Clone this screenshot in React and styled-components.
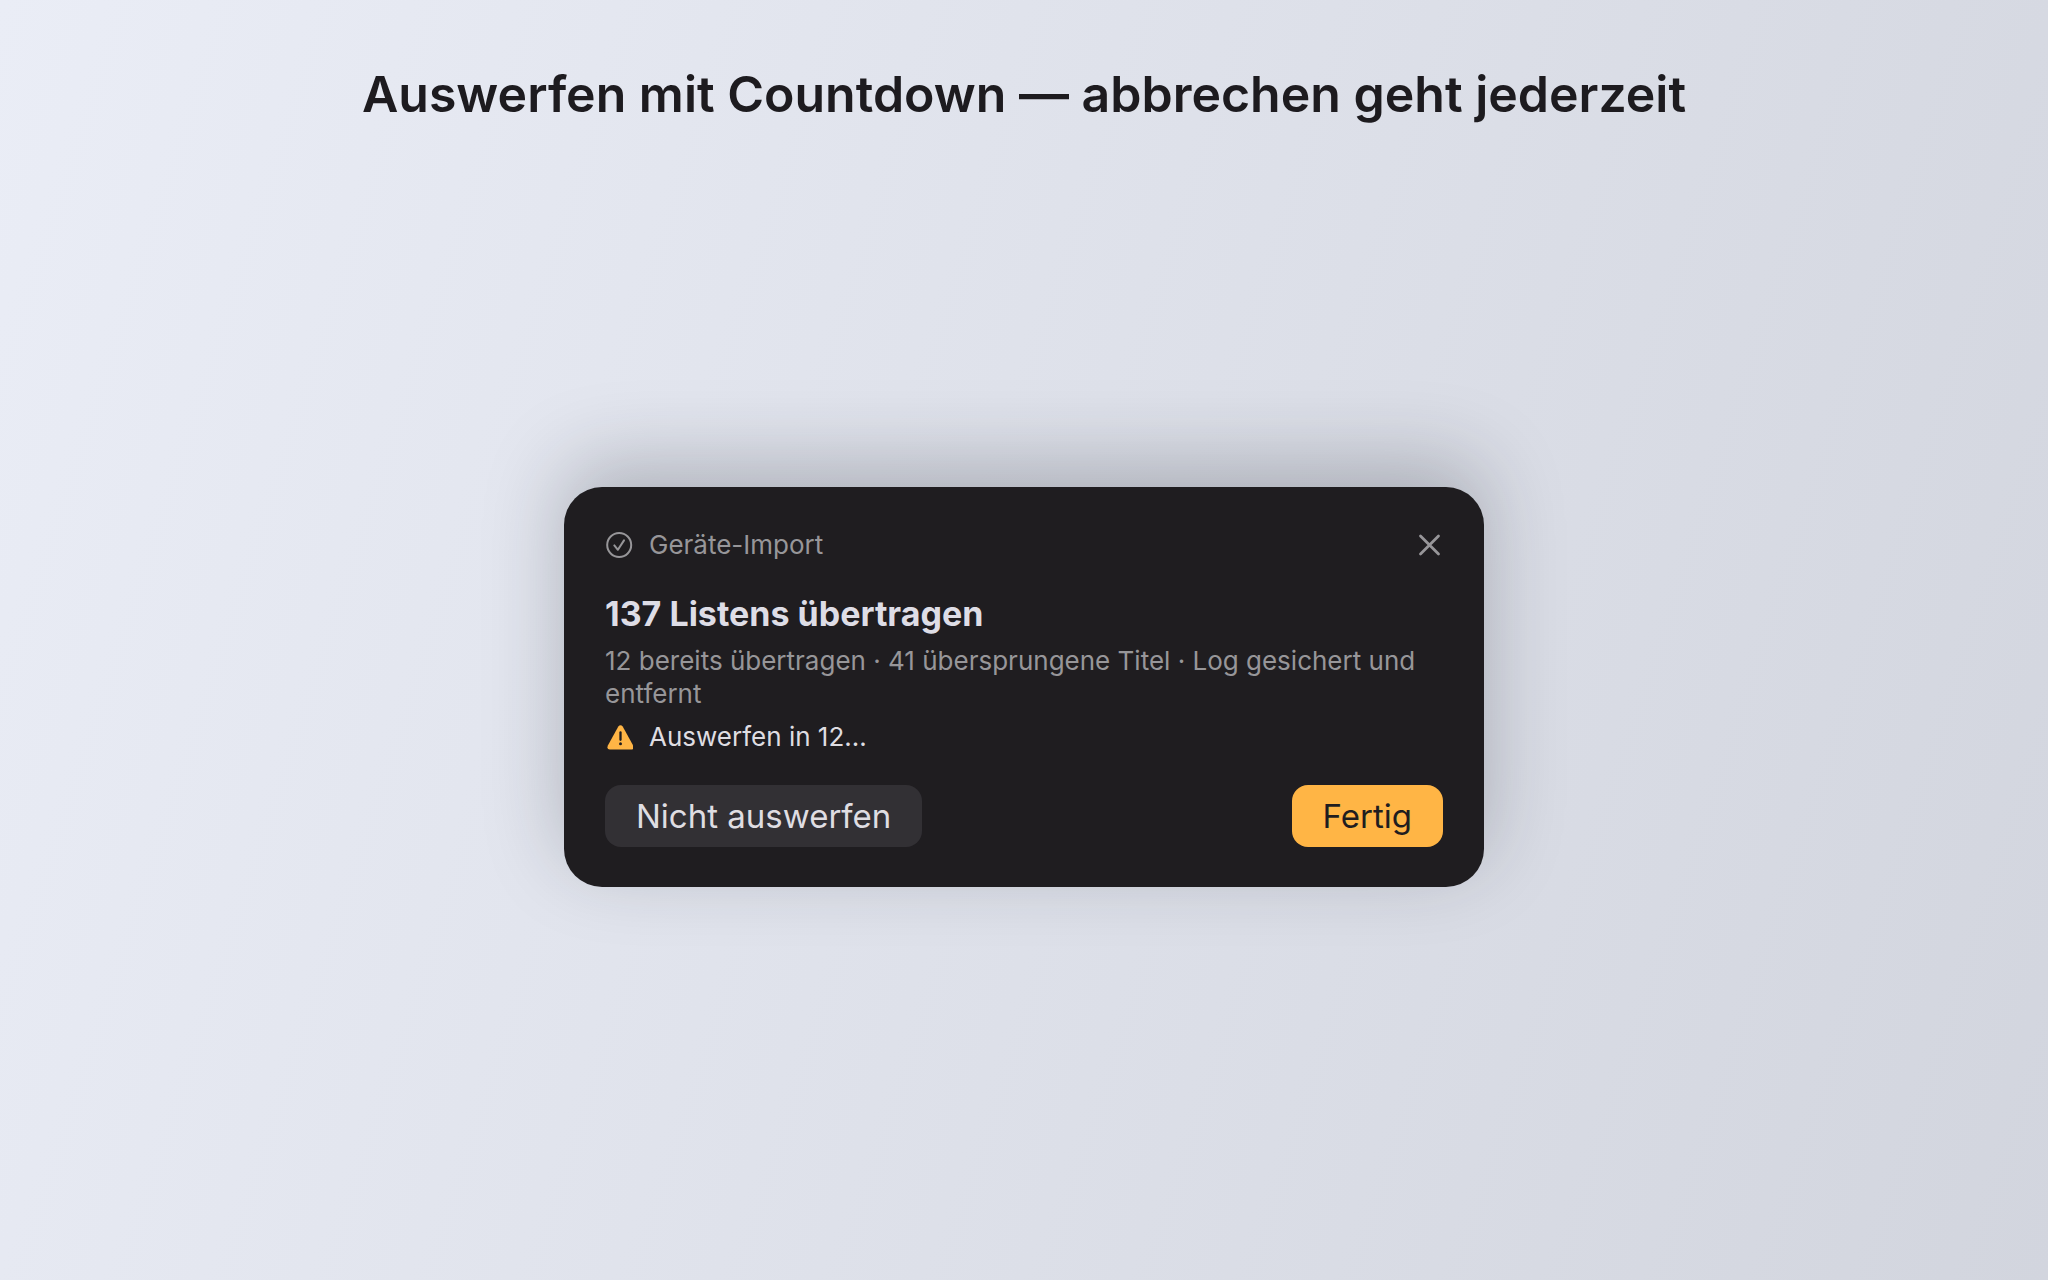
import React from "react";
import styled, { createGlobalStyle } from "styled-components";

const GlobalStyle = createGlobalStyle`
  * { box-sizing: border-box; }
  body {
    margin: 0;
    font-family: Inter, "Liberation Sans", sans-serif;
    -webkit-font-smoothing: antialiased;
  }
  h1, h2, p { margin: 0; }
`;

const Page = styled.div`
  min-height: 100vh;
  display: flex;
  flex-direction: column;
  background: linear-gradient(108deg, #eaedf6, #d2d5de);
`;

const Headline = styled.h1`
  padding: 60px 40px 0;
  text-align: center;
  font-size: 50px;
  line-height: 68px;
  font-weight: 600;
  color: #1d1b1f;
`;

const Stage = styled.main`
  flex: 1;
  display: flex;
  align-items: center;
  justify-content: center;
  padding: 0 40px 34px;
`;

const Card = styled.section`
  width: 100%;
  max-width: 920px;
  padding: 41px 41px 40px;
  border-radius: 38px;
  background: #1f1d20;
  box-shadow: 0 -24px 80px rgba(30, 34, 44, 0.26);
`;

const Row = styled.div`
  display: flex;
  align-items: center;
  gap: 16px;
  min-height: 34px;
  font-size: 26px;
  line-height: 34px;
  color: ${(p) => p.$color};
`;

const Source = styled.span`
  flex: 1;
`;

const Icon = styled.svg`
  flex: none;
  display: block;
  width: 28px;
  height: 28px;
`;

const CloseButton = styled.button`
  padding: 0;
  border: 0;
  background: none;
  color: inherit;
  cursor: pointer;
`;

const Title = styled.h2`
  margin: 32px 0 10px;
  font-size: 34px;
  line-height: 40px;
  font-weight: 700;
  color: #dedde6;
`;

const Details = styled.p`
  margin-bottom: 10px;
  font-size: 26px;
  line-height: 33px;
  color: #979699;
`;

const Actions = styled.div`
  display: flex;
  justify-content: space-between;
  margin-top: 31px;
`;

const Button = styled.button`
  height: 62px;
  padding: 0 31px;
  border: 0;
  border-radius: 16px;
  font: inherit;
  font-size: 33px;
  color: ${(p) => (p.$primary ? "#1f1d20" : "#dfdde2")};
  background: ${(p) => (p.$primary ? "#ffb545" : "#323034")};
  cursor: pointer;
`;

function CheckIcon() {
  return (
    <Icon viewBox="0 0 28 28" fill="none" stroke="currentColor" strokeWidth="2" strokeLinecap="round" strokeLinejoin="round" aria-hidden="true">
      <circle cx="14.2" cy="14" r="12" />
      <path d="M9.3 14.4 12.9 18.8 19 9.4" />
    </Icon>
  );
}

function CloseIcon() {
  return (
    <Icon viewBox="0 0 28 28" fill="none" stroke="currentColor" strokeWidth="2.8" strokeLinecap="round" aria-hidden="true">
      <path d="M5.5 5 23.5 23M23.5 5 5.5 23" />
    </Icon>
  );
}

function WarningIcon() {
  return (
    <Icon viewBox="0 0 28 28" aria-hidden="true">
      <path fill="#ffb545" d="M13.3 3.4Q15.5 .9 17.7 3.4L28 22.2Q29.8 26.3 26.2 26.6H4.8Q1.2 26.3 3 22.2Z" />
      <path d="M15.5 9.4V16.8" stroke="#1f1d20" strokeWidth="2.3" strokeLinecap="round" />
      <circle cx="15.5" cy="20.8" r="1.5" fill="#1f1d20" />
    </Icon>
  );
}

export default function App() {
  return (
    <>
      <GlobalStyle />
      <Page>
        <Headline>Auswerfen mit Countdown — abbrechen geht jederzeit</Headline>
        <Stage>
          <Card>
            <Row $color="#979699">
              <CheckIcon />
              <Source>Geräte-Import</Source>
              <CloseButton type="button" aria-label="Schließen">
                <CloseIcon />
              </CloseButton>
            </Row>
            <Title>137 Listens übertragen</Title>
            <Details>12 bereits übertragen · 41 übersprungene Titel · Log gesichert und entfernt</Details>
            <Row $color="#dfdde2" role="status">
              <WarningIcon />
              <span>Auswerfen in 12…</span>
            </Row>
            <Actions>
              <Button type="button">Nicht auswerfen</Button>
              <Button type="button" $primary>Fertig</Button>
            </Actions>
          </Card>
        </Stage>
      </Page>
    </>
  );
}
